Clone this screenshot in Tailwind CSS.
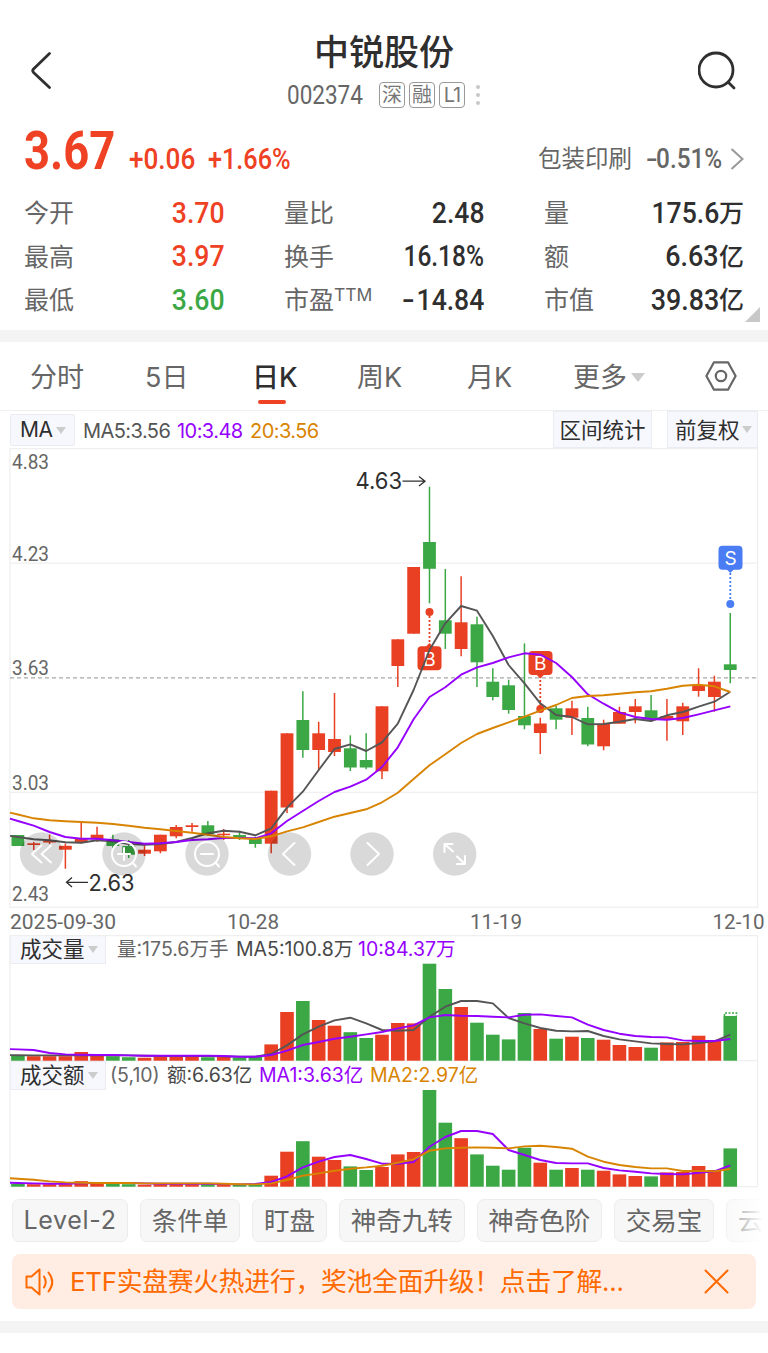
<!DOCTYPE html>
<html lang="zh-CN">
<head>
    <meta charset="UTF-8">
    <meta name="viewport" content="width=device-width, initial-scale=1.0">
    <title>中锐股份 002374</title>
    <script src="https://cdn.jsdelivr.net/npm/@tailwindcss/browser@4"></script>
</head>
<body class="bg-white w-[768px] h-[1353px] overflow-hidden text-[#666] font-['Inter','Noto_Sans_CJK_SC',sans-serif] whitespace-nowrap">

    <!-- Header -->
    <header class="h-[118px] flex justify-between items-start px-[30px]">
        <div class="w-[40px] pt-[51px]">
            <svg class="w-[22px] h-[40px]" viewBox="0 0 22 40" fill="none" stroke="#2f2f2f" stroke-width="2.8" stroke-linecap="round" stroke-linejoin="round"><path d="M19.500 2.500L3.500 18Q2 19.700 3.500 21.400L19.500 36.500"/></svg>
        </div>
        <div class="flex flex-col items-center pt-[30px]">
            <h1 class="text-[35px] leading-[44px] font-medium text-[#2f2f2f]">中锐股份</h1>
            <div class="flex items-center mt-[8px] h-[26px]">
                <span class="w-[92px] pt-[2px] text-[25px] font-['Roboto']"><span class="inline-block origin-left scale-x-[.9]">002374</span></span>
                <div class="flex gap-1 text-[20px] leading-[22px] text-[#777]">
                    <span class="w-[26px] h-[26px] border-[1.500px] border-[#999] rounded-[4px] flex items-center justify-center">深</span>
                    <span class="w-[26px] h-[26px] border-[1.500px] border-[#999] rounded-[4px] flex items-center justify-center">融</span>
                    <span class="w-[26px] h-[26px] border-[1.500px] border-[#999] rounded-[4px] flex items-center justify-center tracking-[-1px]">L1</span>
                </div>
                <svg class="ml-[10px] w-[6px] h-[22px]" viewBox="0 0 6 22" fill="#c8c8c8"><circle cx="3" cy="3" r="2"/><circle cx="3" cy="11" r="2"/><circle cx="3" cy="19" r="2"/></svg>
            </div>
        </div>
        <svg class="mt-[51px] w-[40px] h-[40px]" viewBox="0 0 40 40" fill="none" stroke="#2f2f2f" stroke-width="2.800" stroke-linecap="round"><circle cx="18" cy="19" r="17"/><path d="M30.500 31.500L36 37"/></svg>
    </header>

    <!-- Price -->
    <section class="h-[72px] px-6 flex justify-between">
        <div class="flex items-baseline -mt-[1px] text-[#ef4123] font-['Roboto']">
            <span class="w-[105px] text-[54px] leading-[68px] font-bold"><span class="inline-block origin-left scale-x-[.84]">3.67</span></span>
            <span class="w-[79px] text-[29px] font-medium"><span class="inline-block origin-left scale-x-[.9]">+0.06</span></span>
            <span class="text-[29px] font-medium"><span class="inline-block origin-left scale-x-[.87]">+1.66%</span></span>
        </div>
        <div class="flex items-center h-[82px] text-[23.500px]">
            <span class="w-[108px]">包装印刷</span>
            <span class="w-[84px] text-[27px] font-medium font-['Roboto']"><span class="inline-block origin-left scale-x-[.9]"><span class="inline-block mr-[2px] origin-left scale-x-[1.4]">-</span>0.51%</span></span>
            <svg class="w-[14px] h-[22px]" viewBox="0 0 14 22" fill="none" stroke="#999" stroke-width="2"><path d="M1.500 1L12.500 11L1.500 21"/></svg>
        </div>
    </section>

    <!-- Quote grid -->
    <section class="relative h-[140px] px-6 pt-[1px] grid grid-cols-[200px_200px_200px] auto-rows-[43.500px] gap-x-[60px] text-[25px]">
        <div class="flex justify-between items-center"><span class="pt-[2px]">今开</span><span class="origin-right scale-x-[.9] text-[29.500px] font-medium font-['Roboto'] text-[#ef4123]">3.70</span></div>
        <div class="flex justify-between items-center"><span class="pt-[2px]">量比</span><span class="origin-right scale-x-[.9] text-[29.500px] font-medium font-['Roboto'] text-[#2f2f2f]">2.48</span></div>
        <div class="flex justify-between items-center"><span class="pt-[2px]">量</span><span class="flex items-center text-[#2f2f2f] font-medium"><span class="origin-right scale-x-[.9] text-[29.500px] font-['Roboto']">175.6</span><span class="pt-[2px]">万</span></span></div>
        <div class="flex justify-between items-center"><span class="pt-[2px]">最高</span><span class="origin-right scale-x-[.9] text-[29.500px] font-medium font-['Roboto'] text-[#ef4123]">3.97</span></div>
        <div class="flex justify-between items-center"><span class="pt-[2px]">换手</span><span class="origin-right scale-x-[.83] text-[29.500px] font-medium font-['Roboto'] text-[#2f2f2f]">16.18%</span></div>
        <div class="flex justify-between items-center"><span class="pt-[2px]">额</span><span class="flex items-center text-[#2f2f2f] font-medium"><span class="origin-right scale-x-[.91] text-[29.500px] font-['Roboto']">6.63</span><span class="pt-[2px]">亿</span></span></div>
        <div class="flex justify-between items-center"><span class="pt-[2px]">最低</span><span class="origin-right scale-x-[.9] text-[29.500px] font-medium font-['Roboto'] text-[#3ba845]">3.60</span></div>
        <div class="flex justify-between items-center"><span class="flex pt-[2px]">市盈<span class="text-[17.500px] leading-[26px]">TTM</span></span><span class="origin-right scale-x-[.9] text-[29.500px] font-medium font-['Roboto'] text-[#2f2f2f]"><span class="inline-block mr-[2px] origin-right scale-x-[1.4]">-</span>14.84</span></div>
        <div class="flex justify-between items-center"><span class="pt-[2px]">市值</span><span class="flex items-center text-[#2f2f2f] font-medium"><span class="origin-right scale-x-[.91] text-[29.500px] font-['Roboto']">39.83</span><span class="pt-[2px]">亿</span></span></div>
        <svg class="absolute right-[8px] bottom-[8px] w-[15px] h-[15px]" viewBox="0 0 15 15"><path d="M15 0V15H0Z" fill="#c8c8c8"/></svg>
    </section>

    <div class="h-[12px] bg-[#f4f4f4]"></div>

    <!-- Period tabs -->
    <nav class="h-[69px] pt-[5px] border-b border-[#efefef] flex items-center text-[27px]">
        <span class="w-[114px] pl-[30px]">分时</span>
        <span class="w-[138px] pl-[31px]">5日</span>
        <span class="relative w-[105px] font-medium text-[#2f2f2f]">日K<span class="absolute left-[6px] bottom-[-5px] w-[28px] h-[4px] rounded-full bg-[#ef4123]"></span></span>
        <span class="w-[110px]">周K</span>
        <span class="w-[106px]">月K</span>
        <span class="w-[132px] flex items-center gap-[4px]">更多<svg class="w-[14px] h-[9px] -mt-[3px]" viewBox="0 0 14 9"><path d="M0 0H14L7 9Z" fill="#ccc"/></svg></span>
        <svg class="w-[32px] h-[30px] -mt-[5px]" viewBox="0 0 32 30" fill="none" stroke="#666" stroke-width="2.200" stroke-linejoin="round"><path d="M9 1.300H23L30.600 15L23 28.700H9L1.400 15Z"/><circle cx="16" cy="15" r="5.200"/></svg>
    </nav>

    <!-- Indicator bar -->
    <div class="h-[37px] pl-[10px] pr-[10px] flex items-center text-[20px]">
        <span class="w-[65px] h-[32px] border border-[#ebecf2] bg-[#f7f8fe] rounded-[2px] pl-[9px] pt-[1px] flex items-center gap-[3px] text-[#2f2f2f] text-[21px] tracking-[-.4px]">MA<svg class="w-[10px] h-[7px]" viewBox="0 0 10 7"><path d="M0 0H10L5 7Z" fill="#ccc"/></svg></span>
        <span class="ml-[8px] w-[94px] pt-[2px] tracking-[-.550px] text-[#555]">MA5:3.56</span>
        <span class="w-[73px] pt-[2px] tracking-[-.550px] text-[#9500ff]">10:3.48</span>
        <span class="pt-[2px] tracking-[-.550px] text-[#d88400]">20:3.56</span>
        <span class="ml-auto w-[99px] h-[37px] border border-[#ebecf2] bg-[#f7f8fe] pt-[2px] flex items-center justify-center text-[#2f2f2f] text-[21.500px]">区间统计</span>
        <span class="ml-[15px] w-[91px] h-[37px] border border-[#ebecf2] bg-[#f7f8fe] flex items-center pt-[2px] pl-[7px] gap-[2px] text-[#2f2f2f] text-[21.500px]">前复权<svg class="w-[10px] h-[7px] -mt-[2px] shrink-0" viewBox="0 0 10 7"><path d="M0 0H10L5 7Z" fill="#ccc"/></svg></span>
    </div>

    <!-- Candlestick chart -->
    <svg class="block w-[768px] h-[487px]" viewBox="0 448 768 487">
        <g stroke="#efefef" stroke-width="1.300" fill="none">
            <rect x="10" y="448.600" width="747.500" height="458.600"/>
            <path d="M10 563.200H757M10 792.400H757"/>
        </g>
        <path d="M10 677.800H757" stroke="#aaa" stroke-width="1.200" stroke-dasharray="4 3"/>
        <g id="candles"></g>
        <!-- Buy and sell markers -->
        <g stroke-width="1.800" stroke-dasharray="2 2">
            <path d="M429.500 616V646M540.300 676V706" stroke="#e93f23"/>
            <path d="M730.300 573V600" stroke="#4a7df3"/>
        </g>
        <g fill="#e93f23">
            <circle cx="429.500" cy="612" r="4"/><rect x="417.500" y="646.300" width="24" height="24" rx="4"/><path d="M425.500 647L429.500 643L433.500 647Z"/>
            <circle cx="540.300" cy="709" r="4"/><rect x="528.500" y="651" width="24" height="24" rx="4"/><path d="M536.300 674.500L540.300 678.500L544.300 674.500Z"/>
        </g>
        <g fill="#4a7df3"><circle cx="730.300" cy="604" r="4"/><rect x="718.500" y="545.700" width="24" height="24" rx="4"/><path d="M726.300 569L730.300 573L734.300 569Z"/></g>
        <g fill="#fff" font-size="19" text-anchor="middle"><text x="429.500" y="665.500">B</text><text x="540.300" y="670">B</text><text x="730.500" y="565">S</text></g>
        <g id="averages" fill="none" stroke-width="1.900" stroke-linejoin="round"></g>
        <!-- Price scale -->
        <g class="font-['Roboto']" font-size="20.500" fill="#666">
            <text x="12" y="469.300" textLength="37" lengthAdjust="spacingAndGlyphs">4.83</text>
            <text x="12" y="560.500" textLength="37" lengthAdjust="spacingAndGlyphs">4.23</text>
            <text x="12" y="675.300" textLength="37" lengthAdjust="spacingAndGlyphs">3.63</text>
            <text x="12" y="789.500" textLength="37" lengthAdjust="spacingAndGlyphs">3.03</text>
            <text x="12" y="900.500" textLength="37" lengthAdjust="spacingAndGlyphs">2.43</text>
            <text x="10" y="928.700" textLength="106" lengthAdjust="spacingAndGlyphs">2025-09-30</text>
            <text x="227" y="928.700" textLength="52" lengthAdjust="spacingAndGlyphs">10-28</text>
            <text x="470" y="928.700" textLength="52" lengthAdjust="spacingAndGlyphs">11-19</text>
            <text x="712.500" y="928.700" textLength="52" lengthAdjust="spacingAndGlyphs">12-10</text>
        </g>
        <g font-size="23" fill="#2f2f2f">
            <text x="355.500" y="489" textLength="46.500" lengthAdjust="spacingAndGlyphs">4.63</text>
            <text x="88.500" y="890.700" textLength="46" lengthAdjust="spacingAndGlyphs">2.63</text>
        </g>
        <path d="M402.500 481.200H425M419 476.500L425 481.200L419 486M88 882.300H66.500M72 877.500L66.500 882.300L72 887" fill="none" stroke="#2f2f2f" stroke-width="1.300"/>
        <!-- Chart controls -->
        <g fill="#000" fill-opacity=".15"><circle cx="41.500" cy="854" r="21.700"/><circle cx="124" cy="854" r="21.700"/><circle cx="207" cy="854" r="21.700"/><circle cx="289.500" cy="854" r="21.700"/><circle cx="372" cy="854" r="21.700"/><circle cx="454.700" cy="854" r="21.700"/></g>
        <g fill="none" stroke="#fff" stroke-width="2" stroke-linecap="round" stroke-linejoin="round">
            <path d="M41.500 845.500L32 854L41.500 862.500M51 845.500L41.500 854L51 862.500"/>
            <circle cx="124" cy="854" r="12"/><path d="M118 854H130M124 848V860M133 863L136 866.500"/>
            <circle cx="207" cy="854" r="12"/><path d="M201 854H213M216 863L219 866.500"/>
            <path d="M294.500 843L283 854L294.500 865M367.500 843L379 854L367.500 865"/>
            <path d="M453 851.500L444.500 844V852M444.500 844H452.500M457 856.500L465 864V856M465 864H457"/>
        </g>
    </svg>

    <!-- Volume -->
    <section class="relative h-[126px]">
        <div class="h-[29px] pl-[10px] flex items-center text-[19.500px]">
            <span class="w-[96px] h-[29px] border border-[#ebecf2] bg-[#f7f8fe] flex items-center pl-[9px] gap-[3px] text-[#2f2f2f] text-[21.500px]">成交量<svg class="w-[10px] h-[7px] shrink-0" viewBox="0 0 10 7"><path d="M0 0H10L5 7Z" fill="#ccc"/></svg></span>
            <span class="ml-[11px] w-[119px] pt-[1px]">量:175.6万手</span>
            <span class="w-[122px] pt-[1px] text-[#484848]">MA5:100.8万</span>
            <span class="pt-[1px] text-[#9500ff]">10:84.37万</span>
        </div>
        <svg class="block w-[768px] h-[97px] overflow-visible" viewBox="0 964 768 97">
            <path d="M10 935.600H757.500V1060.700H10Z" fill="none" stroke="#efefef" stroke-width="1.300"/>
            <g id="volume"></g>
            <path d="M724.500 1016V1013H736.500V1016" fill="none" stroke="#3ba845" stroke-width="1.500" stroke-dasharray="2 1.500"/>
        </svg>
    </section>

    <!-- Turnover -->
    <section class="relative h-[126px]">
        <div class="h-[29px] pl-[10px] flex items-center text-[19.500px]">
            <span class="w-[96px] h-[29px] border border-[#ebecf2] bg-[#f7f8fe] flex items-center pl-[9px] gap-[3px] text-[#2f2f2f] text-[21.500px]">成交额<svg class="w-[10px] h-[7px] shrink-0" viewBox="0 0 10 7"><path d="M0 0H10L5 7Z" fill="#ccc"/></svg></span>
            <span class="ml-[4px] w-[57px] pt-[1px]">(5,10)</span>
            <span class="w-[92px] pt-[1px] text-[#484848]">额:6.63亿</span>
            <span class="w-[111px] pt-[1px] text-[#9500ff]">MA1:3.63亿</span>
            <span class="pt-[1px] text-[#d88400]">MA2:2.97亿</span>
        </div>
        <svg class="block w-[768px] h-[97px] overflow-visible" viewBox="0 1090 768 97">
            <path d="M10 1061V1186.700H757.500V1061" fill="none" stroke="#efefef" stroke-width="1.300"/>
            <g id="turnover"></g>
        </svg>
    </section>

    <!-- Feature shortcuts -->
    <div class="relative mt-[12px] pl-[12px] flex gap-[12px] text-[25.500px] overflow-hidden">
        <span class="shrink-0 w-[116px] h-[43px] border border-[#ececec] bg-[#f7f7f7] rounded-[7px] flex items-center justify-center text-[25px] tracking-[.7px]">Level-2</span>
        <span class="shrink-0 w-[100px] h-[43px] border border-[#ececec] bg-[#f7f7f7] rounded-[7px] pt-[1px] flex items-center justify-center">条件单</span>
        <span class="shrink-0 w-[75px] h-[43px] border border-[#ececec] bg-[#f7f7f7] rounded-[7px] pt-[1px] flex items-center justify-center">盯盘</span>
        <span class="shrink-0 w-[125.500px] h-[43px] border border-[#ececec] bg-[#f7f7f7] rounded-[7px] pt-[1px] flex items-center justify-center">神奇九转</span>
        <span class="shrink-0 w-[125.500px] h-[43px] border border-[#ececec] bg-[#f7f7f7] rounded-[7px] pt-[1px] flex items-center justify-center">神奇色阶</span>
        <span class="shrink-0 w-[100px] h-[43px] border border-[#ececec] bg-[#f7f7f7] rounded-[7px] pt-[1px] flex items-center justify-center">交易宝</span>
        <span class="shrink-0 w-[75px] h-[43px] border border-[#ececec] bg-[#f7f7f7] rounded-[7px] pt-[1px] flex items-center pl-[11px]">云</span>
        <div class="absolute right-0 top-0 w-[48px] h-[43px] bg-linear-to-r from-white/20 to-white to-90%"></div>
    </div>

    <!-- Notice -->
    <div class="mt-[12px] mx-[12px] h-[55px] bg-[#ffede4] rounded-[8px] flex items-center pl-[13px] pr-[27px] text-[25.800px] text-[#ff6a00]">
        <svg class="w-[30px] h-[28px]" viewBox="0 0 30 28" fill="none" stroke="#ff6a00" stroke-width="2" stroke-linejoin="round" stroke-linecap="round"><path d="M1.500 8.500H6.500L14.500 1.500V26.500L6.500 19.500H1.500Z"/><path d="M19 8.500Q22.500 14 19 19.500M23.500 4.500Q31 14 23.500 23.500"/></svg>
        <span class="ml-[15px] pt-[1px] tracking-[-.250px]">ETF实盘赛火热进行，奖池全面升级！点击了解...</span>
        <svg class="ml-auto w-[25px] h-[25px]" viewBox="0 0 25 25" stroke="#ff6a00" stroke-width="2" stroke-linecap="round"><path d="M1.500 1.500L23.500 23.500M23.500 1.500L1.500 23.500"/></svg>
    </div>

    <div class="mt-[12px] h-[12px] bg-[#f4f4f4]"></div>

    <script>
        const RED = '#e93f23';
        const GREEN = '#3ba845';
        const GRAY = '#555';
        const PURPLE = '#9500ff';
        const ORANGE = '#d88400';
        const FIRST_X = 17.9;
        const STEP = 15.83;

        // One row per day: [direction, body top, body bottom, high, low]
        const candles = [
            ['g', 835, 846, 835, 846], ['r', 843.3, 845, 842, 850], ['r', 841, 842.5, 834.5, 844],
            ['r', 845.8, 849.7, 843.5, 868.7], ['r', 838.7, 842.3, 821.7, 843.5], ['r', 834.7, 839.3, 826.7, 841.7],
            ['g', 839.3, 846, 834.7, 848.7], ['g', 846, 854.7, 840, 858], ['r', 849.7, 853.7, 845, 856],
            ['r', 834.7, 851.3, 834.7, 853.3], ['r', 827, 836.3, 825, 838.3], ['r', 825.3, 827, 823, 831.7],
            ['g', 825.3, 834, 821, 835.7], ['r', 833.7, 835.2, 829, 840], ['g', 835, 837.7, 830.7, 840],
            ['g', 839, 844, 836.7, 847.7], ['r', 790.7, 843.7, 790.7, 853.3], ['r', 733.3, 807.5, 733.3, 813],
            ['g', 720, 750, 691.3, 757.7], ['r', 733.3, 750, 721.7, 770], ['r', 739, 752, 693, 756],
            ['g', 748.3, 767.5, 735.3, 771], ['g', 760, 767.5, 733.3, 769.3], ['r', 706.3, 771.3, 706.3, 779],
            ['r', 639.3, 666, 639.3, 687], ['r', 567, 633.7, 567, 633.7], ['g', 542, 568.8, 486.7, 603.3],
            ['g', 620.3, 633.7, 569, 649], ['r', 622.3, 649, 576.3, 656.3], ['g', 624.3, 662.3, 616.7, 687],
            ['g', 681.7, 697, 668.3, 700.3], ['g', 685.3, 710, 679.7, 713.7], ['g', 716, 725.3, 643.3, 729.3],
            ['r', 723.5, 733, 717.7, 754], ['g', 708.3, 719.7, 705.7, 729.3], ['r', 708.3, 717.7, 700.7, 735],
            ['g', 718, 744.5, 706.7, 746.3], ['r', 723.7, 746.3, 719.7, 750.3], ['r', 712, 723.7, 706.7, 723.7],
            ['r', 706.3, 712, 699, 723.3], ['g', 710.3, 719.7, 695, 719.7], ['r', 716, 719.3, 699, 740.7],
            ['r', 706.3, 721.3, 702.7, 735], ['r', 685.3, 691, 668.3, 696.7], ['r', 681.7, 697, 675.7, 711.7],
            ['g', 664.3, 670, 613, 683.3]
        ];

        const ma5 = [837, 839.3, 840.3, 842.3, 842.7, 840.3, 841.3, 844, 844.7, 844, 842, 838, 833.3, 830.7, 831.7, 835.3, 828.3, 807.7, 791.7, 770, 749, 744.3, 751, 742.3, 723.7, 690, 650, 623.3, 606, 610.7, 636, 665, 683.3, 703.3, 715, 717, 724.3, 724, 721.7, 719, 721, 715.3, 712, 706.7, 701.7, 691.7];
        const ma10 = [821, 825.7, 832, 837, 838.7, 838.7, 840.3, 842, 843.7, 843.3, 842, 840, 839.3, 838, 838, 838.3, 833.3, 821, 811, 801, 792, 786.7, 779.7, 767, 747.3, 719.3, 697, 687.3, 674.7, 667.3, 663, 657.3, 653.3, 654.7, 663, 677, 694.3, 703.7, 712.3, 717, 719, 719.7, 718, 714.3, 710.3, 706.3];
        const ma20 = [814.5, 818.3, 820.3, 821.3, 822, 822.7, 824, 825.7, 827.7, 829.3, 831, 832.7, 834.7, 837, 838.3, 839, 836.3, 831.3, 827.3, 822, 816.7, 813, 809.3, 802.3, 792.7, 779, 765.3, 754.3, 743, 734, 728, 722.3, 716.7, 710.7, 705, 698, 696, 695.3, 693.7, 692.3, 691.3, 688.7, 685.7, 684.7, 686.3, 692];

        const volume = [5, 4.5, 4.5, 4.5, 8.7, 5.5, 4.5, 3.5, 3, 4, 4, 4, 3.5, 4, 3, 4, 16.3, 48.7, 59.7, 40.7, 35, 28.5, 22.7, 26, 37.7, 37.3, 97, 71.7, 53.7, 38, 26, 21.3, 47.7, 31.7, 22, 24, 22.7, 21, 15.7, 13.7, 13, 18.3, 18.7, 25, 20.7, 44.7];
        const volumeMa5 = [5.5, 5.3, 5.3, 5.3, 5.5, 5.5, 5.5, 5.3, 5, 4.7, 4.7, 4.7, 4.7, 4.3, 4, 4, 6.7, 15.3, 26.3, 34, 40.3, 43, 37.3, 30.7, 30, 30.7, 44, 54, 59.7, 59.7, 57.3, 42.7, 37.3, 32.7, 30, 29.3, 29.7, 24.7, 21.3, 19.3, 17.3, 16.7, 16.3, 17.7, 19.3, 26];
        const volumeMa10 = [11.3, 10.7, 7.7, 6.3, 6, 5.7, 5.7, 5.3, 5, 5, 5, 5, 5, 4.7, 4, 4, 5.7, 10, 15.7, 18.7, 22, 24, 26.3, 28.7, 32.3, 35.3, 43.3, 45.7, 45, 44.7, 44, 43.3, 46, 46.3, 44.7, 43.3, 36, 30.7, 27, 24.7, 23.7, 23.3, 20.3, 19.7, 19.7, 21.7];

        const turnover = [3, 2.5, 2.5, 2.5, 5.5, 4, 3, 2.5, 2, 2.5, 2.5, 2.5, 2.5, 2.5, 2, 2.5, 11, 35, 45.5, 30, 26.7, 20.3, 16.7, 19.7, 32.3, 34.7, 96.7, 64, 48.5, 32.3, 21, 17, 39, 24, 17, 18.7, 17, 16, 12.3, 10.7, 10.3, 14.3, 14.7, 20.7, 16.7, 38.3];
        const turnoverMa5 = [3.7, 3.3, 3, 3, 3.3, 3.7, 3.7, 3.7, 3.3, 3, 3, 3, 3, 2.7, 2.3, 2.7, 4.7, 10.3, 19.3, 25, 29.7, 31.7, 27.7, 23, 23, 24.7, 40, 49.7, 55.7, 55.7, 52.7, 36.7, 31.7, 26.7, 23.7, 23.3, 23.3, 18.7, 16.3, 15, 13.3, 12.7, 12.3, 14, 15.3, 21.3];
        const turnoverMa10 = [8, 7, 5.3, 4.3, 4, 3.7, 3.7, 3.7, 3.3, 3.3, 3.3, 3.3, 3.3, 3, 2.5, 2.3, 3.3, 6.7, 11, 13.3, 16, 18, 19.3, 21, 24, 27.3, 36, 38.3, 39, 39.3, 39, 38.3, 40.3, 41, 39.7, 38, 30, 25, 21.7, 19.7, 18.3, 18.3, 15.7, 15.7, 15.3, 17.7];

        // Returns the centre x of a day
        function dayX(i) {
            return FIRST_X + i * STEP;
        }

        function colorOf(i) {
            return candles[i][0] === 'r' ? RED : GREEN;
        }

        function line(ys, color) {
            const points = ys.map((y, i) => `${dayX(i).toFixed(1)},${y}`);
            return `<polyline points="10,${ys[0] - (ys[1] - ys[0]) * 0.5} ${points.join(' ')}" stroke="${color}"/>`;
        }

        function drawCandles() {
            document.getElementById('candles').innerHTML = candles.map(([, top, bottom, high, low], i) => {
                const x = dayX(i);
                return `<path d="M${x} ${high}V${low}" stroke="${colorOf(i)}" stroke-width="1.500"/>` +
                    `<rect x="${x - 6.4}" y="${top}" width="12.800" height="${bottom - top}" fill="${colorOf(i)}"/>`;
            }).join('');
            document.getElementById('averages').innerHTML = line(ma5, GRAY) + line(ma10, PURPLE) + line(ma20, ORANGE);
        }

        // Bars and averages share the same base line
        function drawBars(id, base, bars, averages) {
            const rects = bars.map((h, i) =>
                `<rect x="${dayX(i) - 6.8}" y="${base - h}" width="13.600" height="${h}" fill="${colorOf(i)}"/>`);
            const lines = averages.map(([values, color]) => line(values.map(v => base - v), color));
            document.getElementById(id).innerHTML = rects.join('') +
                `<g fill="none" stroke-width="1.900" stroke-linejoin="round">${lines.join('')}</g>`;
        }

        drawCandles();
        drawBars('volume', 1060.7, volume, [[volumeMa5, GRAY], [volumeMa10, PURPLE]]);
        drawBars('turnover', 1186.7, turnover, [[turnoverMa5, PURPLE], [turnoverMa10, ORANGE]]);
    </script>
</body>
</html>
